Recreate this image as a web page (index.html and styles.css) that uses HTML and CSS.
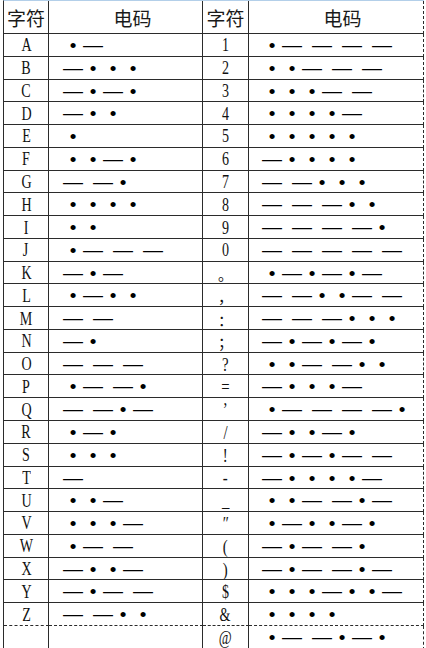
FILE: index.html
```html
<!DOCTYPE html>
<html lang="zh">
<head>
<meta charset="utf-8">
<title>摩尔斯电码表</title>
<link rel="stylesheet" href="styles.css">
</head>
<body>
<div class="tbl">
  <div class="h c1">字符</div><div class="h c2">电码</div><div class="h c3">字符</div><div class="h c4">电码</div>

  <div class="k c1"><span>A</span></div><div class="m c2"><b>•</b><i>—</i></div><div class="k c3"><span>1</span></div><div class="m c4"><b>•</b><i>—</i> <i>—</i> <i>—</i> <i>—</i></div>
  <div class="k c1"><span>B</span></div><div class="m c2"><i>—</i><b>•</b><b>•</b><b>•</b></div><div class="k c3"><span>2</span></div><div class="m c4"><b>•</b><b>•</b><i>—</i> <i>—</i> <i>—</i></div>
  <div class="k c1"><span>C</span></div><div class="m c2"><i>—</i><b>•</b><i>—</i><b>•</b></div><div class="k c3"><span>3</span></div><div class="m c4"><b>•</b><b>•</b><b>•</b><i>—</i> <i>—</i></div>
  <div class="k c1"><span>D</span></div><div class="m c2"><i>—</i><b>•</b><b>•</b></div><div class="k c3"><span>4</span></div><div class="m c4"><b>•</b><b>•</b><b>•</b><b>•</b><i>—</i></div>
  <div class="k c1"><span>E</span></div><div class="m c2"><b>•</b></div><div class="k c3"><span>5</span></div><div class="m c4"><b>•</b><b>•</b><b>•</b><b>•</b><b>•</b></div>
  <div class="k c1"><span>F</span></div><div class="m c2"><b>•</b><b>•</b><i>—</i><b>•</b></div><div class="k c3"><span>6</span></div><div class="m c4"><i>—</i><b>•</b><b>•</b><b>•</b><b>•</b></div>
  <div class="k c1"><span>G</span></div><div class="m c2"><i>—</i> <i>—</i><b>•</b></div><div class="k c3"><span>7</span></div><div class="m c4"><i>—</i> <i>—</i><b>•</b><b>•</b><b>•</b></div>
  <div class="k c1"><span>H</span></div><div class="m c2"><b>•</b><b>•</b><b>•</b><b>•</b></div><div class="k c3"><span>8</span></div><div class="m c4"><i>—</i> <i>—</i> <i>—</i><b>•</b><b>•</b></div>
  <div class="k c1"><span>I</span></div><div class="m c2"><b>•</b><b>•</b></div><div class="k c3"><span>9</span></div><div class="m c4"><i>—</i> <i>—</i> <i>—</i> <i>—</i><b>•</b></div>
  <div class="k c1"><span>J</span></div><div class="m c2"><b>•</b><i>—</i> <i>—</i> <i>—</i></div><div class="k c3"><span>0</span></div><div class="m c4"><i>—</i> <i>—</i> <i>—</i> <i>—</i> <i>—</i></div>
  <div class="k c1"><span>K</span></div><div class="m c2"><i>—</i><b>•</b><i>—</i></div><div class="k c3"><span class="p">。</span></div><div class="m c4"><b>•</b><i>—</i><b>•</b><i>—</i><b>•</b><i>—</i></div>
  <div class="k c1"><span>L</span></div><div class="m c2"><b>•</b><i>—</i><b>•</b><b>•</b></div><div class="k c3"><span class="p">，</span></div><div class="m c4"><i>—</i> <i>—</i><b>•</b><b>•</b><i>—</i> <i>—</i></div>
  <div class="k c1"><span>M</span></div><div class="m c2"><i>—</i> <i>—</i></div><div class="k c3"><span class="p">：</span></div><div class="m c4"><i>—</i> <i>—</i> <i>—</i><b>•</b><b>•</b><b>•</b></div>
  <div class="k c1"><span>N</span></div><div class="m c2"><i>—</i><b>•</b></div><div class="k c3"><span class="p">；</span></div><div class="m c4"><i>—</i><b>•</b><i>—</i><b>•</b><i>—</i><b>•</b></div>
  <div class="k c1"><span>O</span></div><div class="m c2"><i>—</i> <i>—</i> <i>—</i></div><div class="k c3"><span class="big">?</span></div><div class="m c4"><b>•</b><b>•</b><i>—</i> <i>—</i><b>•</b><b>•</b></div>
  <div class="k c1"><span>P</span></div><div class="m c2"><b>•</b><i>—</i> <i>—</i><b>•</b></div><div class="k c3"><span class="big">=</span></div><div class="m c4"><i>—</i><b>•</b><b>•</b><b>•</b><i>—</i></div>
  <div class="k c1"><span>Q</span></div><div class="m c2"><i>—</i> <i>—</i><b>•</b><i>—</i></div><div class="k c3"><span class="big">’</span></div><div class="m c4"><b>•</b><i>—</i> <i>—</i> <i>—</i> <i>—</i><b>•</b></div>
  <div class="k c1"><span>R</span></div><div class="m c2"><b>•</b><i>—</i><b>•</b></div><div class="k c3"><span class="big">/</span></div><div class="m c4"><i>—</i><b>•</b><b>•</b><i>—</i><b>•</b></div>
  <div class="k c1"><span>S</span></div><div class="m c2"><b>•</b><b>•</b><b>•</b></div><div class="k c3"><span class="big">!</span></div><div class="m c4"><i>—</i><b>•</b><i>—</i><b>•</b><i>—</i> <i>—</i></div>
  <div class="k c1"><span>T</span></div><div class="m c2"><i>—</i></div><div class="k c3"><span class="big">-</span></div><div class="m c4"><i>—</i><b>•</b><b>•</b><b>•</b><b>•</b><i>—</i></div>
  <div class="k c1"><span>U</span></div><div class="m c2"><b>•</b><b>•</b><i>—</i></div><div class="k c3"><span class="big">_</span></div><div class="m c4"><b>•</b><b>•</b><i>—</i> <i>—</i><b>•</b><i>—</i></div>
  <div class="k c1"><span>V</span></div><div class="m c2"><b>•</b><b>•</b><b>•</b><i>—</i></div><div class="k c3"><span class="big">″</span></div><div class="m c4"><b>•</b><i>—</i><b>•</b><b>•</b><i>—</i><b>•</b></div>
  <div class="k c1"><span>W</span></div><div class="m c2"><b>•</b><i>—</i> <i>—</i></div><div class="k c3"><span class="big">(</span></div><div class="m c4"><i>—</i><b>•</b><i>—</i> <i>—</i><b>•</b></div>
  <div class="k c1"><span>X</span></div><div class="m c2"><i>—</i><b>•</b><b>•</b><i>—</i></div><div class="k c3"><span class="big">)</span></div><div class="m c4"><i>—</i><b>•</b><i>—</i> <i>—</i><b>•</b><i>—</i></div>
  <div class="k c1"><span>Y</span></div><div class="m c2"><i>—</i><b>•</b><i>—</i> <i>—</i></div><div class="k c3"><span>$</span></div><div class="m c4"><b>•</b><b>•</b><b>•</b><i>—</i><b>•</b><b>•</b><i>—</i></div>
  <div class="k c1 z"><span>Z</span></div><div class="m c2 z"><i>—</i> <i>—</i><b>•</b><b>•</b></div><div class="k c3 z"><span>&amp;</span></div><div class="m c4 z"><b>•</b><b>•</b><b>•</b><b>•</b></div>
  <div class="k c1 last"></div><div class="m c2 last"></div><div class="k c3 last"><span>@</span></div><div class="m c4 last"><b>•</b><i>—</i> <i>—</i><b>•</b><i>—</i><b>•</b></div>
</div>
</body>
</html>
```
FILE: styles.css
```css
html, body {
  margin: 0;
  padding: 0;
  background: #ffffff;
}

.tbl {
  display: grid;
  grid-template-columns: 45px 154px 46px 175px;
  grid-template-rows: 33px repeat(26, 22.77px) 24px;
  margin-left: 3px;
  width: max-content;
  border-left: 1px solid #2b2b2b;
  border-top: 1px solid #b3cfe9;
  color: #111;
}

.tbl > div {
  box-sizing: border-box;
  border-right: 1px solid #2b2b2b;
  border-bottom: 1px solid #2b2b2b;
  display: flex;
  align-items: center;
  overflow: hidden;
}

.tbl > .c4 {
  border-right: 1px dashed #2b2b2b;
}

.tbl > .z {
  border-bottom: 1px dashed #2b2b2b;
}

.tbl > .last {
  border-bottom: none;
}

.h {
  justify-content: center;
  font-family: "Noto Sans CJK SC", "Noto Sans", sans-serif;
  font-size: 19px;
  color: #1a1a1a;
  padding-top: 1px;
}

.k {
  justify-content: center;
  font-family: "Liberation Serif", "Noto Sans CJK SC", serif;
  font-size: 18px;
  padding-top: 2px;
}

.k span {
  display: inline-block;
  transform: scaleX(0.78);
}

.k .p {
  font-family: "Noto Sans CJK SC", sans-serif;
  font-size: 15px;
  transform: none;
}

.k .big {
  font-size: 19px;
}

.tbl > .m {
  display: block;
  font-family: "Liberation Sans", sans-serif;
  font-size: 20px;
  word-spacing: 4.44px;
  white-space: pre;
  line-height: 22px;
}

.c2 {
  padding-left: 14px;
}

.c4 {
  padding-left: 13px;
}

.m b {
  display: inline-block;
  width: 20px;
  text-align: center;
  font-weight: normal;
  font-size: 19px;
  color: #000;
}

.m i {
  display: inline-block;
  width: 20px;
  font-style: normal;
  font-size: 20px;
  text-align: left;
  color: #000;
}
```
